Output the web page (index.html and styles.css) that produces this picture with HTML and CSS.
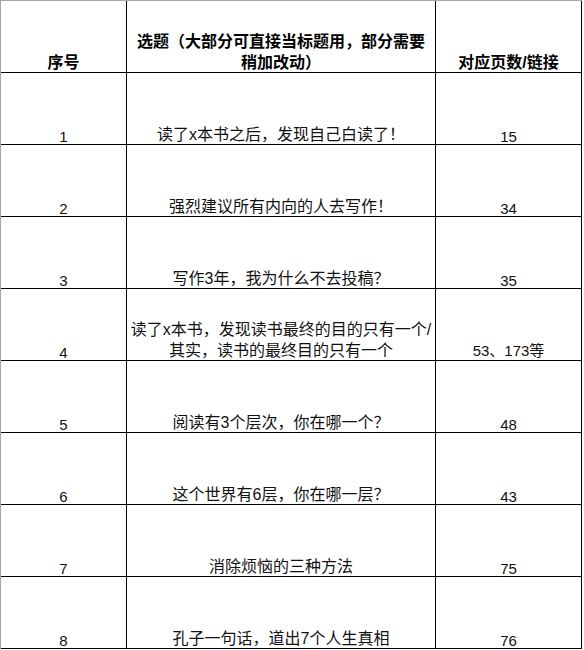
FILE: index.html
```html
<!DOCTYPE html>
<html lang="zh-CN">
<head>
<meta charset="utf-8">
<title>选题表</title>
<link rel="stylesheet" href="styles.css">
</head>
<body>
<div class="sheet">
  <div class="cell head"><span class="txt">序号</span></div>
  <div class="cell head"><span class="txt">选题（大部分可直接当标题用，部分需要<br>稍加改动）</span></div>
  <div class="cell head"><span class="txt">对应页数/链接</span></div>

  <div class="cell num"><span class="txt">1</span></div>
  <div class="cell"><span class="txt">读了x本书之后，发现自己白读了！</span></div>
  <div class="cell num"><span class="txt">15</span></div>

  <div class="cell num"><span class="txt">2</span></div>
  <div class="cell"><span class="txt">强烈建议所有内向的人去写作！</span></div>
  <div class="cell num"><span class="txt">34</span></div>

  <div class="cell num"><span class="txt">3</span></div>
  <div class="cell"><span class="txt">写作3年，我为什么不去投稿？</span></div>
  <div class="cell num"><span class="txt">35</span></div>

  <div class="cell num"><span class="txt">4</span></div>
  <div class="cell"><span class="txt">读了x本书，发现读书最终的目的只有一个/<br>其实，读书的最终目的只有一个</span></div>
  <div class="cell num mixed"><span class="txt">53、173等</span></div>

  <div class="cell num"><span class="txt">5</span></div>
  <div class="cell"><span class="txt">阅读有3个层次，你在哪一个？</span></div>
  <div class="cell num"><span class="txt">48</span></div>

  <div class="cell num"><span class="txt">6</span></div>
  <div class="cell"><span class="txt">这个世界有6层，你在哪一层？</span></div>
  <div class="cell num"><span class="txt">43</span></div>

  <div class="cell num"><span class="txt">7</span></div>
  <div class="cell"><span class="txt">消除烦恼的三种方法</span></div>
  <div class="cell num"><span class="txt">75</span></div>

  <div class="cell num"><span class="txt">8</span></div>
  <div class="cell"><span class="txt">孔子一句话，道出7个人生真相</span></div>
  <div class="cell num"><span class="txt">76</span></div>
</div>
</body>
</html>
```
FILE: styles.css
```css
html, body {
  margin: 0;
  padding: 0;
  background: #fff;
}

.sheet {
  display: grid;
  grid-template-columns: 126px 309px 146px;
  grid-template-rows: repeat(9, 72px);
  width: 581px;
  border-top: 1px solid #a6a6a6;
  border-left: 1px solid #a6a6a6;
  font-family: "Liberation Sans", "Noto Sans CJK SC", sans-serif;
  font-size: 16px;
  color: #111;
}

.cell {
  display: flex;
  flex-direction: column;
  justify-content: flex-end;
  align-items: center;
  text-align: center;
  line-height: 20.5px;
  border-right: 1px solid #000;
  border-bottom: 1px solid #000;
  white-space: nowrap;
}

.txt {
  display: block;
  margin-bottom: -1px;
}

.head {
  font-weight: bold;
  color: #000;
}

.num {
  font-size: 15px;
}

.num .txt {
  margin-bottom: -3px;
}

.num.mixed .txt {
  margin-bottom: -1px;
}
```
